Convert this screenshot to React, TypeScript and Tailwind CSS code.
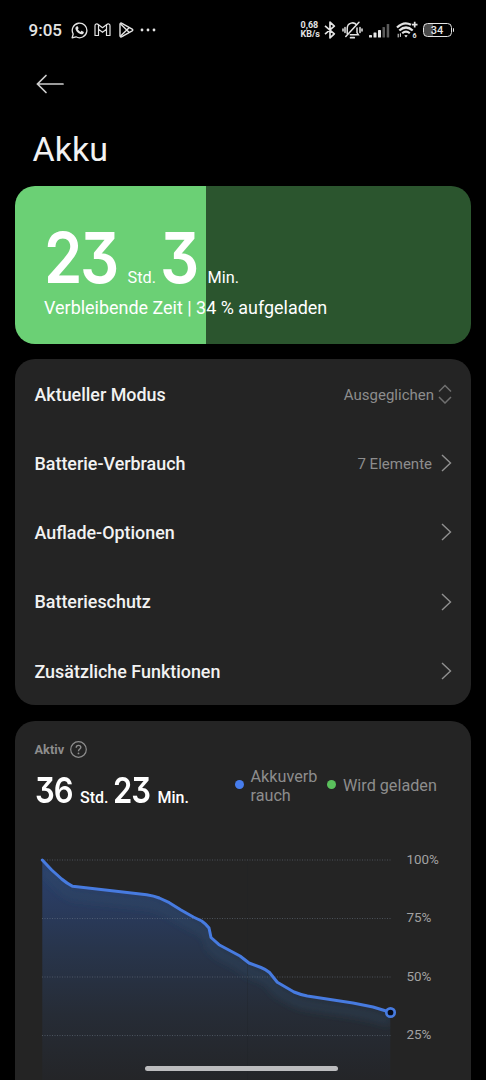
import type { ReactNode } from "react";

const CURVE =
  "M42.3 860 L51.7 870 L61.7 879 Q67 883.5 72.7 886.3 L146.7 894.7 Q154 895.8 159.3 898 L169.3 902.7 L181 910 L193.3 917 L201.7 921 Q206 924 209 928 L211 937.5 L219 944.7 L240 956 L249 963 L261 967.5 Q266 969.5 269.5 972.5 L277.3 982.3 L294 992 Q300 994.5 307.3 996 L353 1003 L373 1007 L390.3 1012.3";
const AREA = `${CURVE} V1090 H42.3 Z`;
const LEVELS = [860, 918.5, 977, 1035.5];

const MENU: { label: string; value?: string; picker?: boolean }[] = [
  { label: "Aktueller Modus", value: "Ausgeglichen", picker: true },
  { label: "Batterie-Verbrauch", value: "7 Elemente" },
  { label: "Auflade-Optionen" },
  { label: "Batterieschutz" },
  { label: "Zusätzliche Funktionen" },
];

function StatusBar() {
  return (
    <header className="flex h-[60px] items-center justify-between pr-[32px] pl-[28.5px] text-[#e4e4e4]">
      <div className="flex items-center">
        <span className="w-[42px] text-[17px] leading-none font-medium">9:05</span>
        <svg className="mr-[6px]" width="17" height="17" viewBox="0 0 17 17" fill="none" stroke="currentColor" strokeWidth="1.3">
          <path d="M1.1 15.9 2.2 12A7.3 7.3 0 1 1 5 14.8Z" strokeLinejoin="round" />
          <path
            fill="currentColor"
            stroke="none"
            d="M5.8 4.3c.4-.3.9-.2 1.1.2l.6 1.4c.1.3 0 .6-.3.9l-.4.5c.6 1.2 1.5 2 2.7 2.6l.7-.8c.2-.2.5-.3.8-.2l1.5.8c.3.2.4.4.3.7-.2 1.3-1.3 2-2.4 1.9-2.900-.4-5.500-2.900-6-5.700-.1-.9.5-1.800 1.400-2.300Z"
          />
        </svg>
        <svg className="mr-[8px]" width="17" height="14" viewBox="0 0 17 14" fill="none" stroke="currentColor" strokeWidth="1.2" strokeLinejoin="round">
          <path d="M1 12.500V2.800C1 1 2.900.4 4.200 1.400L8.500 4.700l4.300-3.300C14.100.4 16 1 16 2.800v9.700h-3.500V6.300l-4 3-4-3v6.200Z" />
          <path d="M4.500 1.800v4.500M12.500 1.800v4.500" />
        </svg>
        <svg className="mr-[6px]" width="15" height="16" viewBox="0 0 15 16" fill="none" stroke="currentColor" strokeWidth="1.400" strokeLinejoin="round">
          <path d="M1 2.300C1 1.200 2 .8 2.900 1.300L13.200 7.100c.8.5.8 1.300 0 1.800L2.900 14.700C2 15.200 1 14.800 1 13.700Z" />
          <path d="m1.400 1.700 8.900 8.800M1.400 14.300l8.900-8.800" />
        </svg>
        <svg width="16" height="4" viewBox="0 0 16 4" fill="currentColor">
          <circle cx="2" cy="2" r="1.400" />
          <circle cx="8" cy="2" r="1.400" />
          <circle cx="14" cy="2" r="1.400" />
        </svg>
      </div>
      <div className="flex items-center">
        <div className="mr-[4px] w-[19px] text-[9px] leading-[9px] font-bold whitespace-nowrap">
          0,68
          <br />
          KB/s
        </div>
        <svg className="mr-[6px]" width="12" height="18" viewBox="0 0 12 18" fill="none" stroke="currentColor" strokeWidth="1.700" strokeLinejoin="round">
          <path d="m1 4.800 9.300 8L6 16.800V1.200l4.300 4L1 13.200" />
        </svg>
        <svg className="mr-[6px]" width="21" height="18" viewBox="0 0 21 18" fill="none" stroke="currentColor" strokeWidth="1.500" strokeLinecap="round">
          <path d="M5.200 12.700V7.500C5.200 1.500 12.500.3 14.600 4.200M8.300 13.800h8L15 11.500V7M17 1.200 3.800 15.500" />
          <path d="M8.600 16.700h3.600" strokeWidth="1.800" />
          <path d="M3 6.500v5M1 8v2M18 6.500v5M20 8v2" />
        </svg>
        <svg className="mr-[6px]" width="21" height="15" viewBox="0 0 21 15" fill="currentColor">
          <rect x="0" y="12" width="3" height="2.500" rx=".6" />
          <rect x="4.500" y="9.500" width="3" height="5" rx=".6" />
          <rect x="9" y="7" width="3" height="7.500" rx=".6" />
          <rect x="13.500" y="4" width="2.500" height="10.500" rx=".6" opacity=".4" />
          <rect x="17.700" y="1" width="2.500" height="13.500" rx=".6" opacity=".4" />
        </svg>
        <svg className="mr-[5px]" width="22" height="18" viewBox="0 0 22 18" fill="none" stroke="currentColor" strokeWidth="2.200">
          <path d="M1 6.500Q8 -.3 15 3.800M3.300 9.500q6.700-6 13.400 0M6.200 12.300q3.800-3.400 7.600 0" />
          <path d="M18.700.800v5.600M15.900 3.600h5.600" strokeWidth="1.700" />
          <path d="m10 16.500-1.700-1.900q1.700-1.200 3.400 0Z" fill="currentColor" stroke="none" />
          <path d="M2.200 12.800v3.600M4.400 12.300v3.600" strokeWidth="1" />
          <text x="16.600" y="17.200" fontSize="7" fontWeight="700" fill="currentColor" stroke="none">
            6
          </text>
        </svg>
        <div className="flex items-center">
          <div className="flex h-[14px] w-[29px] items-center justify-center rounded-[4.500px] border-[1.500px] border-[#e4e4e4] bg-[linear-gradient(90deg,#4a4a4a_0_34%,transparent_34%)] text-[11px] leading-none font-medium">
            34
          </div>
          <div className="ml-px h-[4px] w-[1.500px] rounded-r-full bg-[#e4e4e4]" />
        </div>
      </div>
    </header>
  );
}

function Digits({ children, className }: { children: ReactNode; className: string }) {
  return (
    <span className={`inline-block origin-bottom-left font-[Inter,sans-serif] leading-none [font-feature-settings:'cv09'] ${className}`}>
      {children}
    </span>
  );
}

function RemainingCard() {
  return (
    <section className="mx-[15px] h-[158px] rounded-[20px] bg-[linear-gradient(90deg,#6bd075_0_191.500px,#2b552e_191.500px)] pt-[37px] pl-[29px]">
      <div className="flex h-[70px] items-baseline text-[16.300px] whitespace-nowrap">
        <Digits className="w-[83.500px] scale-x-[0.880] text-[70px] font-[560] tracking-[-2.800px]">23</Digits>
        <span className="w-[32.500px]">Std.</span>
        <Digits className="w-[47.500px] scale-x-[0.880] text-[70px] font-[560]">3</Digits>
        <span>Min.</span>
      </div>
      <p className="mt-[4px] text-[17.950px] leading-[22px]">Verbleibende Zeit | 34 % aufgeladen</p>
    </section>
  );
}

function MenuCard() {
  return (
    <section className="mx-[15px] mt-[15.400px] h-[346px] rounded-[20px] bg-[#242424] pr-[19px] pl-[19.500px]">
      {MENU.map((item) => (
        <div key={item.label} className="flex h-[69.200px] items-center">
          <span className="flex-1 pt-[2.500px] text-[17.900px] font-medium text-[#f2f2f2]">{item.label}</span>
          {item.value && <span className="pt-[2px] text-[15px] text-[#8d8d8d]">{item.value}</span>}
          {item.picker ? (
            <svg className="ml-[4px]" width="14" height="20" viewBox="0 0 14 20" fill="none" stroke="#6f6f6f" strokeWidth="1.500">
              <path d="m1 7.500 6-6 6 6M1 13l6 6 6-6" />
            </svg>
          ) : (
            <svg className="ml-[9px]" width="11" height="18" viewBox="0 0 11 18" fill="none" stroke="#909090" strokeWidth="1.400">
              <path d="m1 1 8.500 8L1 17" />
            </svg>
          )}
        </div>
      ))}
    </section>
  );
}

function ActivityCard() {
  return (
    <section className="mx-[15px] mt-[15.500px] h-[400px] rounded-t-[20px] bg-[#242424] pt-[19px]">
      <div className="flex h-[20px] items-center gap-[6px] pl-[19.500px] text-[#8d8d8d]">
        <span className="text-[12.800px] font-bold">Aktiv</span>
        <svg className="-mt-px" width="17" height="17" viewBox="0 0 17 17" fill="none" stroke="currentColor" strokeWidth="1.200">
          <circle cx="8.500" cy="8.500" r="7.800" />
          <path d="M6.200 6.800q0-2.400 2.300-2.400t2.300 2c0 1.600-2.300 1.700-2.300 3.800" strokeWidth="1.400" />
          <circle cx="8.500" cy="12.400" r=".9" fill="currentColor" stroke="none" />
        </svg>
      </div>
      <div className="flex h-[74px] pl-[20px]">
        <div className="flex h-[46px] w-[199.500px] items-baseline pt-[12px] text-[16px] font-medium whitespace-nowrap">
          <Digits className="w-[45px] scale-x-[0.860] text-[36px] font-[560] tracking-[-1.300px]">36</Digits>
          <span className="w-[33px]">Std.</span>
          <Digits className="w-[44.500px] scale-x-[0.860] text-[36px] font-[560] tracking-[-1.300px]">23</Digits>
          <span>Min.</span>
        </div>
        <div className="flex h-[52px] items-center text-[16.200px] leading-[19px] text-[#8d8d8d]">
          <i className="mt-[-2px] mr-[7px] size-[9px] rounded-full bg-[#477ded]" />
          <span className="w-[76.500px]">
            Akkuverb
            <br />
            rauch
          </span>
          <i className="mt-[-2px] mr-[7px] size-[9px] rounded-full bg-[#5ac05c]" />
          <span>Wird geladen</span>
        </div>
      </div>
      <div className="flex pt-[16px] pl-[22px]">
        <svg width="360" height="230" viewBox="37 850 360 230" fill="none">
          <defs>
            <linearGradient id="area" gradientUnits="userSpaceOnUse" x1="0" y1="860" x2="0" y2="1080">
              <stop offset="0" stopColor="#2b4170" />
              <stop offset=".4" stopColor="#28354c" />
              <stop offset=".7" stopColor="#262c36" />
              <stop offset="1" stopColor="#242528" />
            </linearGradient>
            <clipPath id="below">
              <path d={AREA} />
            </clipPath>
            <filter id="soft" x="-10%" y="-10%" width="120%" height="130%">
              <feGaussianBlur stdDeviation="4" />
            </filter>
          </defs>
          <path d={AREA} fill="url(#area)" />
          <g clipPath="url(#below)">
            <path d={CURVE} transform="translate(0 9)" stroke="#33506a" strokeOpacity=".4" strokeWidth="8" filter="url(#soft)" />
          </g>
          <path d="M247.500 860V1080" stroke="#1c1f25" strokeOpacity=".25" />
          {LEVELS.map((y) => (
            <path key={y} d={`M42 ${y}H392`} stroke="#727d8c" strokeOpacity=".5" strokeWidth="1" strokeDasharray="1 1.500" />
          ))}
          <path d={CURVE} stroke="#477be0" strokeWidth="3" strokeLinejoin="round" strokeLinecap="round" />
          <circle cx="390.500" cy="1012.500" r="4.200" fill="#050a18" stroke="#477be0" strokeWidth="2.700" />
        </svg>
        <div className="pl-[9.500px] text-[13.400px] leading-[58.500px] text-[#a2a2a2]">
          <div className="mt-[-19px]">100%</div>
          <div>75%</div>
          <div>50%</div>
          <div>25%</div>
        </div>
      </div>
    </section>
  );
}

export default function App() {
  return (
    <main className="relative h-[1080px] w-[486px] overflow-hidden bg-black font-[Roboto,sans-serif] text-white">
      <StatusBar />
      <div className="flex h-[48px] items-center pl-[35.500px]">
        <svg width="28" height="20" viewBox="0 0 28 20" fill="none" stroke="#cecece" strokeWidth="1.700" strokeLinecap="round">
          <path d="M1.500 10H27M10 1.500 1.500 10l8.500 8.500" />
        </svg>
      </div>
      <h1 className="h-[78px] pt-[20.500px] pl-[32.500px] text-[34px] leading-[40px] text-[#f2f2f2]">Akku</h1>
      <RemainingCard />
      <MenuCard />
      <ActivityCard />
      <div className="absolute bottom-[9px] left-[145px] h-[5px] w-[193px] rounded-full bg-[#bcbcbe]" />
    </main>
  );
}
